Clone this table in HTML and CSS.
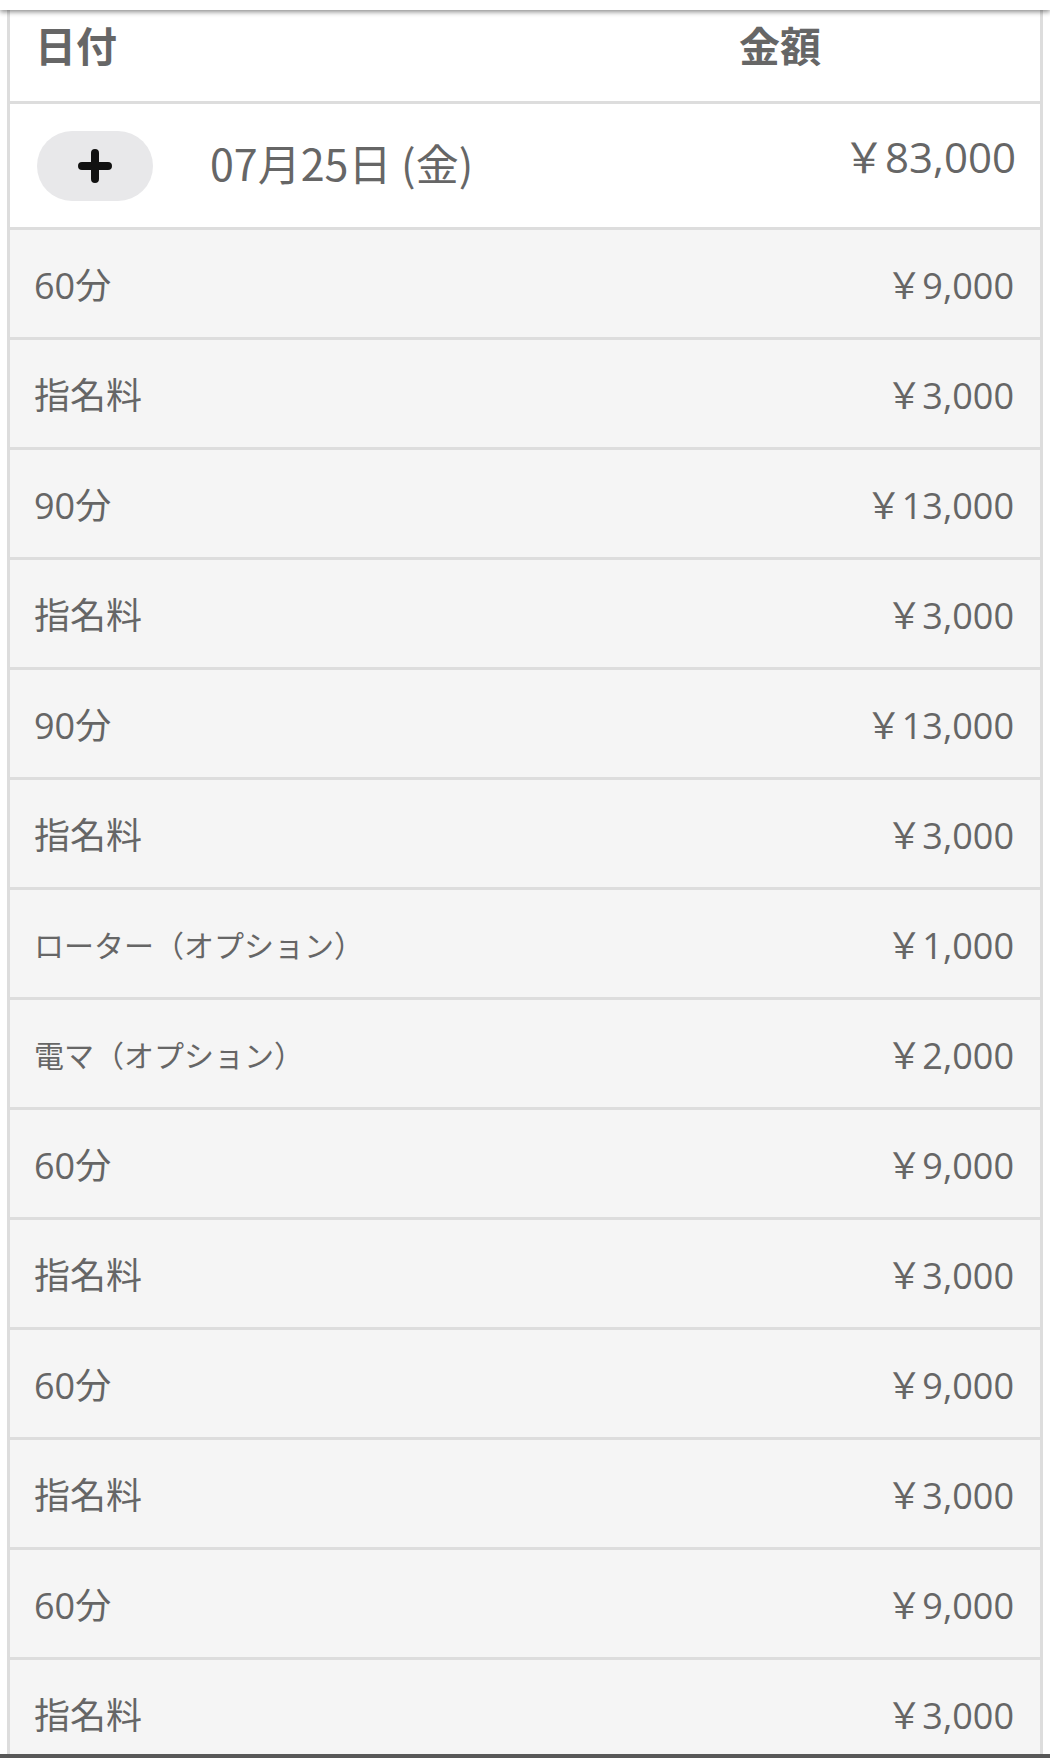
FILE: index.html
```html
<!DOCTYPE html>
<html lang="ja">
<head>
<meta charset="utf-8">
<title>売上明細</title>
<link rel="stylesheet" href="styles.css">
</head>
<body>
<div class="topbar"></div>
<div class="page">
  <div class="table">
    <div class="head-row">
      <div class="head-date">日付</div>
      <div class="head-amount">金額</div>
    </div>
    <div class="day-row">
      <button class="plus-btn" type="button" aria-label="展開">
        <svg width="34" height="34" viewBox="0 0 34 34"><path d="M17 4V30M4 17H30" stroke="#111" stroke-width="8" stroke-linecap="round" fill="none"/></svg>
      </button>
      <div class="day-label">07月25日 (金)</div>
      <div class="day-amount">￥83,000</div>
    </div>
    <div class="item-row"><div class="item-name">60分</div><div class="item-amount">￥9,000</div></div>
    <div class="item-row"><div class="item-name">指名料</div><div class="item-amount">￥3,000</div></div>
    <div class="item-row"><div class="item-name">90分</div><div class="item-amount">￥13,000</div></div>
    <div class="item-row"><div class="item-name">指名料</div><div class="item-amount">￥3,000</div></div>
    <div class="item-row"><div class="item-name">90分</div><div class="item-amount">￥13,000</div></div>
    <div class="item-row"><div class="item-name">指名料</div><div class="item-amount">￥3,000</div></div>
    <div class="item-row"><div class="item-name small">ローター（オプション）</div><div class="item-amount">￥1,000</div></div>
    <div class="item-row"><div class="item-name small">電マ（オプション）</div><div class="item-amount">￥2,000</div></div>
    <div class="item-row"><div class="item-name">60分</div><div class="item-amount">￥9,000</div></div>
    <div class="item-row"><div class="item-name">指名料</div><div class="item-amount">￥3,000</div></div>
    <div class="item-row"><div class="item-name">60分</div><div class="item-amount">￥9,000</div></div>
    <div class="item-row"><div class="item-name">指名料</div><div class="item-amount">￥3,000</div></div>
    <div class="item-row"><div class="item-name">60分</div><div class="item-amount">￥9,000</div></div>
    <div class="item-row"><div class="item-name">指名料</div><div class="item-amount">￥3,000</div></div>
  </div>
</div>
<div class="bottombar"></div>
</body>
</html>
```
FILE: styles.css
```css
html, body {
  margin: 0;
  padding: 0;
  background: #ffffff;
}
body {
  font-family: "Open Sans", "Noto Sans CJK JP", sans-serif;
  color: #666666;
  overflow: hidden;
  height: 1758px;
}
.topbar {
  position: fixed;
  top: 0;
  left: 0;
  right: 0;
  height: 10px;
  background: #ffffff;
  box-shadow: 0 2px 5px rgba(0, 0, 0, 0.45);
  z-index: 5;
}
.bottombar {
  position: fixed;
  left: 0;
  right: 0;
  bottom: 0;
  height: 4px;
  background: #585858;
  z-index: 5;
}
.page {
  padding: 10px 7px 0 7px;
}
.table {
  border-left: 3px solid #dddddd;
  border-right: 3px solid #dddddd;
}
.head-row {
  display: flex;
  height: 94px;
  border-bottom: 3px solid #dddddd;
  background: #ffffff;
  font-family: "Noto Sans CJK JP", sans-serif;
  font-weight: 700;
  font-size: 41px;
  line-height: 56px;
  box-sizing: border-box;
  padding-top: 6px;
}
.head-date {
  padding-left: 25px;
  width: 704px;
}
.head-amount {
  padding-left: 0;
}
.day-row {
  display: flex;
  align-items: center;
  height: 123px;
  border-bottom: 3px solid #dddddd;
  background: #ffffff;
  padding: 0 24px 0 27px;
}
.plus-btn {
  width: 116px;
  height: 70px;
  border: none;
  border-radius: 35px;
  background: #e8e8ea;
  display: flex;
  align-items: center;
  justify-content: center;
  padding: 0;
  flex: none;
}
.plus-btn svg {
  display: block;
}
.day-label {
  margin-left: 57px;
  font-family: "Noto Sans CJK JP", sans-serif;
  font-size: 43px;
  line-height: 60px;
  padding-bottom: 8px;
  flex: 1;
}
.day-amount {
  font-size: 42px;
  line-height: 60px;
  padding-bottom: 18px;
}
.item-row {
  display: flex;
  align-items: center;
  justify-content: space-between;
  border-bottom: 3px solid #dddddd;
  background: #f5f5f5;
  padding: 4px 26px 0 24px;
  box-sizing: content-box;
  height: 103px;
}
.item-name {
  font-size: 36px;
  line-height: 50px;
}
.item-name.small {
  font-size: 30px;
}
.item-amount {
  font-size: 36px;
  line-height: 50px;
}
```
